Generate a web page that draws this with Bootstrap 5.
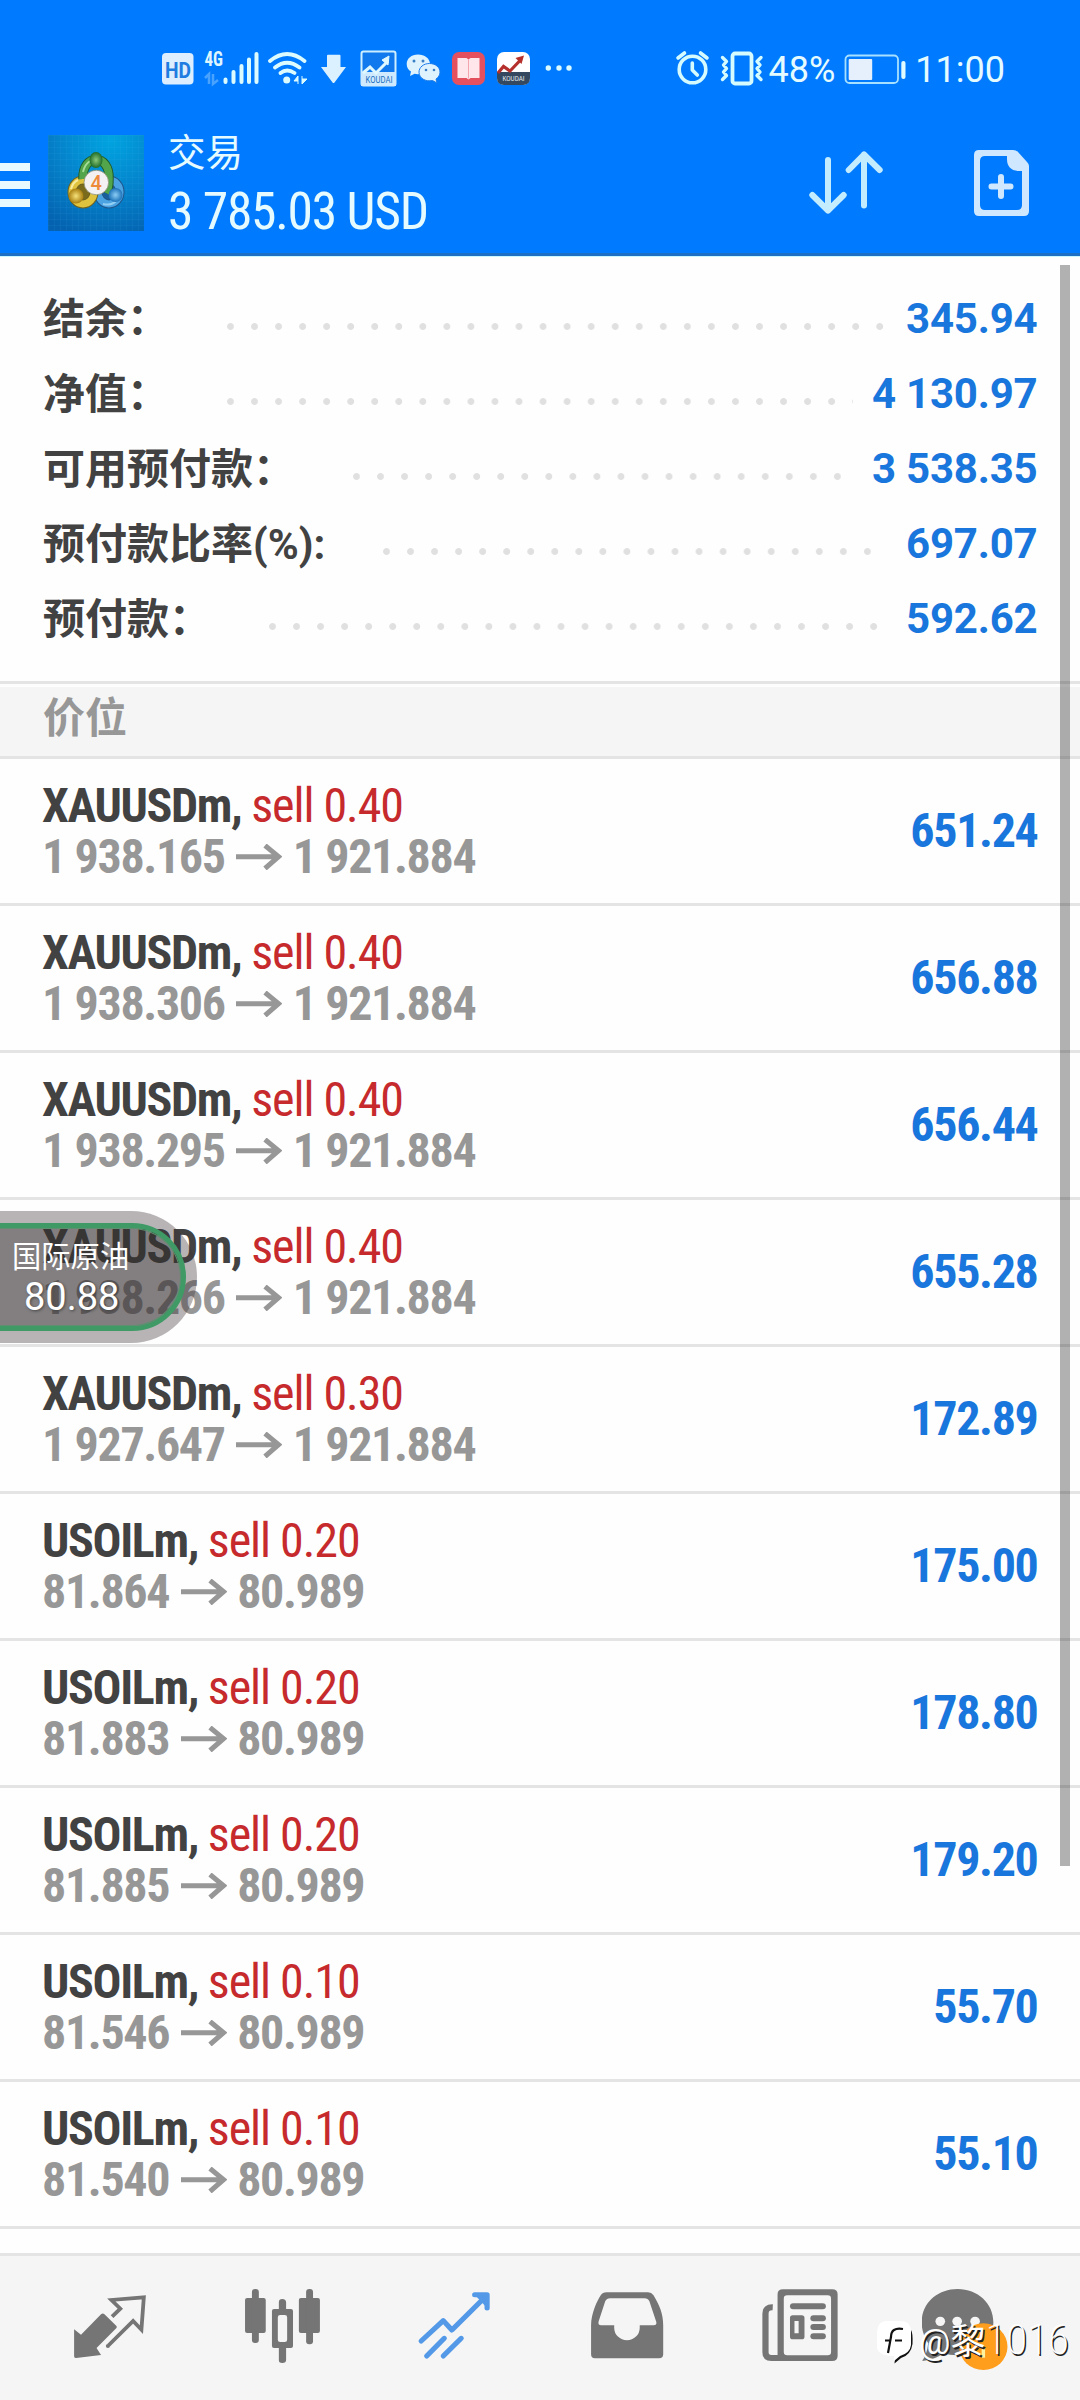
<!DOCTYPE html>
<html lang="zh-CN">
<head>
<meta charset="utf-8">
<meta name="viewport" content="width=device-width, initial-scale=1">
<title>交易</title>
<link href="https://cdn.jsdelivr.net/npm/bootstrap@5.3.0/dist/css/bootstrap.min.css" rel="stylesheet">
<style>
body{font-family:Roboto,"Noto Sans CJK SC",sans-serif;background:#fefefe;color:#424242;width:1080px;height:2400px;overflow:hidden;white-space:nowrap}
svg{display:block;flex:none}
.app-head{height:256px;background:#007bff;border-bottom:3px solid #1c6fc4;color:#e6fbff;box-shadow:0 1px #c8f8ff}
.status-bar{height:64px;margin-top:37px;padding:0 75px 0 161px}
.status-txt{font-size:36px;line-height:1;padding-top:2px}
.title-bar{height:130px;padding-right:51px;margin-top:17px}
.menu-btn{gap:10px;padding-top:3px}
.menu-btn i{display:block;width:30px;height:8px;background:#e8faff}
.app-logo{margin-left:18px}
.head-text{margin-left:24px;padding-top:4px}
.head-title{font-size:37.5px;line-height:44px;margin-bottom:9px}
.cond{font-stretch:75%}
.head-sum{font-size:51.5px;line-height:56px;letter-spacing:-1.25px;font-weight:450}
.stats{padding:25px 42.5px 0 43px;height:425px;font-size:42px;font-weight:700}
.stat-line{height:75px}
.stat-label{padding-top:2px}
.leader{height:7px;margin:16px 19px 0 58px;background:radial-gradient(circle at 3.5px 3.5px,#e0e0e0 3px,transparent 3.8px) 0 0/24.06px 7px repeat-x}
.val{color:#1876dc}
.stats .val{letter-spacing:-.2px}
.section-head{height:78px;border-top:3px solid #e4e4e4;border-bottom:3px solid #e4e4e4;background:#f5f5f5;box-shadow:inset 0 3px #fdfdfd;color:#979797;font-size:42px;font-weight:700;padding-left:43px;padding-bottom:4px}
.pos{height:147px;border-bottom:3px solid #e4e4e4;padding:0 42.5px 0 42px;font-size:48px;font-stretch:75%;font-weight:700;line-height:51px;letter-spacing:-1.35px}
.pos .val{padding-bottom:2px}
.side{font-weight:450;letter-spacing:-1.05px;color:#c62a2c}
.route{color:#979797}
.route svg{margin:0 10.5px 0 11.5px}
.tabs{height:147px;border-top:3px solid #e4e4e4;background:#f5f5f5;padding-left:24px;margin-top:24px}
.tab-item{width:172.5px;color:#757575}
.scroll-thumb{left:1060px;top:265px;width:10px;height:1601px;background:rgba(0,0,0,.3)}
.bubble{left:-70px;top:1211px;width:267px;height:132px;border-radius:66px;background:rgba(60,50,55,.36);padding:12px 11px 12px 0}
.bubble-in{border:5px solid #3f9a66;border-radius:55px;background:rgba(45,42,40,.38);color:#fff;padding-left:73px;box-shadow:inset 0 0 0 1px #5f8f70}
.bubble-name{font-size:29.3px;line-height:32px;padding-left:4px;margin-top:5px}
.bubble-rate{font-size:38px;line-height:48px;padding-left:16px;font-weight:450;text-shadow:1px 1px 3px #444}
.sign{left:875px;top:2314px;color:#fff;text-shadow:1.5px 1.5px 0 #222}
.sign-txt{font-size:35px;line-height:50px;margin-left:6px}
.sign-num{font-size:43px;font-weight:200;font-stretch:75%}
</style>
<script src="https://cdn.jsdelivr.net/npm/bootstrap@5.3.0/dist/js/bootstrap.bundle.min.js"></script>
</head>
<body class="position-relative">
<svg width="0" height="0" class="position-absolute"><symbol id="arr" viewBox="0 0 46 26"><path d="M0 12.700H43M29 1.500L42.500 12.700 29 24.500" fill="none" stroke="#979797" stroke-width="5"/></symbol></svg>

<header class="app-head overflow-hidden">
  <div class="status-bar d-flex align-items-center justify-content-between">
    <svg width="412" height="44" viewBox="161 47 412 44">
      <rect x="162" y="53" width="31.500" height="31.500" rx="4" fill="#dceeff"/>
      <text x="165" y="77.500" font-size="22" font-weight="700" fill="#1f7ce0" textLength="26" lengthAdjust="spacingAndGlyphs">HD</text>
      <text x="204.500" y="66" font-size="20" font-weight="700" class="cond" fill="#dff6ff" textLength="18.500" lengthAdjust="spacingAndGlyphs">4G</text>
      <path d="M209 84V74l-4 4M213 74v10l5-4" fill="none" stroke="#4aa2ff" stroke-width="2.500"/>
      <path d="M225.500 79.500V82M233.500 72V82M241.500 66V82M249 59.500V82M256.500 54V82" stroke="#dcfbff" stroke-width="4" stroke-linecap="round"/>
      <path d="M270 61Q287 47 304.500 61M275 67.500Q287 58 299.500 67.500M280.500 73Q287 68 294.500 73" fill="none" stroke="#dcfbff" stroke-width="3.800" stroke-linecap="round"/>
      <circle cx="286.700" cy="80" r="3.500" fill="#dcfbff"/>
      <path d="M298 84V76l-4 5h4M302 76v8l5-5h-5" fill="#dcfbff" stroke="#dcfbff"/>
      <path d="M328 54.700h11.500q1 0 1 1V67h5.500L334.500 82.500q-1 1-2 0L321 67h6V55.700q0-1 1-1z" fill="#dcf1ff"/>
      <rect x="361.500" y="51.500" width="34" height="34" rx="2" fill="#1179ee" stroke="#cdeeff" stroke-width="2"/>
      <path d="M361 72h35v14h-35z" fill="#cfeaff"/>
      <path d="M363 73l7-6 6 6 12-12" fill="none" stroke="#dff8ff" stroke-width="3"/><path d="M382 60l7-4-1 9z" fill="#dff8ff" stroke="#dff8ff"/>
      <text x="365.500" y="83" font-size="9" fill="#206fc0" textLength="27" lengthAdjust="spacingAndGlyphs">KOUDAI</text>
      <path d="M418 54.500c-6.500 0-11.300 4-11.300 9.500 0 3.500 1.700 6 4.300 7.600l-1 4.400 4.600-2.200c7.400 1.800 15.400-3 15.400-9.800 0-5.500-5.500-9.500-12-9.500z" fill="#dff3ff"/>
      <circle cx="414" cy="61" r="1.500" fill="#3b80c4"/><circle cx="423" cy="61" r="1.500" fill="#3b80c4"/>
      <path d="M429.500 63.500c-6 0-10.500 3.800-10.500 8.700 0 6 6.500 9.800 13.500 8.300l4.500 2.500-1-4c2.400-1.600 4-4 4-6.800 0-4.900-4.500-8.700-10.500-8.700z" fill="#dff3ff" stroke="#1b7bea" stroke-width="1"/>
      <circle cx="426" cy="70" r="1.300" fill="#3b80c4"/><circle cx="434" cy="70" r="1.300" fill="#3b80c4"/>
      <rect x="452" y="52" width="33" height="33" rx="7" fill="#e5505e"/>
      <path d="M457.500 58h9l2 1.500 2-1.500h9v20h-9l-2 1.500-2-1.500h-9z" fill="#ffe6ea"/><path d="M468.500 59.500v19" stroke="#f2a5ae" stroke-width="1"/>
      <rect x="497" y="52" width="33" height="33" rx="7" fill="#fff"/>
      <path d="M497 72h33v6q0 7-7 7h-19q-7 0-7-7z" fill="#34495f"/>
      <path d="M498 73l5.500-6.500 6.500 4.500 11-11.500" fill="none" stroke="#b5302c" stroke-width="3.200"/><path d="M515.500 58l8.500-2.500-2.500 8.500z" fill="#b5302c"/>
      <text x="502.500" y="81" font-size="7.500" fill="#e8eef4" textLength="22" lengthAdjust="spacingAndGlyphs">KOUDAI</text>
      <g fill="#dcfbff"><circle cx="548.300" cy="68" r="2.700"/><circle cx="559" cy="68" r="2.700"/><circle cx="569" cy="68" r="2.700"/></g>
    </svg>
    <div class="d-flex align-items-center">
      <svg width="94" height="44" viewBox="675 47 94 44" fill="none" stroke="#d6fbff" stroke-linecap="round" stroke-linejoin="round">
        <circle cx="692.500" cy="69.500" r="13.300" stroke-width="3.600"/><path d="M692.300 63v7l5 5" stroke-width="3.600"/>
        <path d="M678 58l6.500-5M707 58l-6.500-5" stroke-width="3.600"/>
        <rect x="732.500" y="53.500" width="19" height="30" rx="2.500" stroke-width="3.800"/>
        <path d="M722.500 57.500l4 4-3 3.500 3 3.500-3 3.500 3 3.500-4 4M761 57.500l-4 4 3 3.500-3 3.500 3 3.500-3 3.500 4 4" stroke-width="3.400"/>
      </svg>
      <span class="status-txt">48%</span>
      <svg width="72" height="36" viewBox="835 50 72 36" class="me-2">
        <rect x="845.500" y="54.500" width="52.500" height="27.500" rx="4" fill="none" stroke="#a8e0ff" stroke-width="1.800"/>
        <rect x="848.700" y="58" width="23.500" height="21" rx="1" fill="#e6effc"/><rect x="901.300" y="60" width="4.200" height="18" rx="2" fill="#e0fbff"/>
      </svg>
      <span class="status-txt">11:00</span>
    </div>
  </div>
  <div class="title-bar d-flex align-items-center">
    <div class="menu-btn d-flex flex-column"><i></i><i></i><i></i></div>
    <svg width="96" height="96" viewBox="0 0 96 96" class="app-logo">
      <defs>
        <radialGradient id="bgd" cx=".65" cy=".05" r="1.050"><stop offset="0" stop-color="#00a4e0"/><stop offset=".5" stop-color="#0484cc"/><stop offset="1" stop-color="#0462b0"/></radialGradient>
        <pattern id="grd" width="6" height="6" patternUnits="userSpaceOnUse"><path d="M0 0H6M0 0V6" stroke="#4ab8ee" stroke-opacity=".15" stroke-width="1"/></pattern>
        <radialGradient id="gg"><stop offset="0" stop-color="#8cc97c"/><stop offset="1" stop-color="#1f6b28"/></radialGradient>
        <radialGradient id="gy"><stop offset="0" stop-color="#f6e27a"/><stop offset="1" stop-color="#a87e10"/></radialGradient>
        <radialGradient id="gb"><stop offset="0" stop-color="#8ccdf5"/><stop offset="1" stop-color="#1c72b8"/></radialGradient>
      </defs>
      <path fill="url(#bgd)" d="M0 0h96v96H0z"/><path fill="url(#grd)" d="M0 0h96v96H0z"/>
      <ellipse cx="61" cy="57" rx="11" ry="12" fill="#1b5f9a" stroke="#1f568c" stroke-width="9"/>
      <ellipse cx="61" cy="57" rx="11" ry="12" fill="none" stroke="#4ba3e2" stroke-width="7"/>
      <ellipse cx="35" cy="57" rx="11" ry="12" fill="#7a6a1c" stroke="#6e6220" stroke-width="9"/>
      <ellipse cx="35" cy="57" rx="11" ry="12" fill="none" stroke="#dfc23e" stroke-width="7"/>
      <path d="M35 44C34 18 62 18 61 44 61 52 60 54 58 58" fill="none" stroke="#1f5a2c" stroke-width="9.500"/>
      <path d="M35 44C34 18 62 18 61 44 61 52 60 54 58 58" fill="none" stroke="#52a54a" stroke-width="7.500"/>
      <path d="M35 37q2-8 7-11" fill="none" stroke="#a5dc98" stroke-width="2"/>
      <path d="M23 54q2-7 7-9" fill="none" stroke="#f8ec9c" stroke-width="2"/>
      <path d="M55 69q8 2 13-3" fill="none" stroke="#93cff4" stroke-width="2"/>
      <ellipse cx="48" cy="25" rx="6.500" ry="8" fill="url(#gg)"/><circle cx="28" cy="61" r="7.500" fill="url(#gy)"/><circle cx="67.500" cy="60" r="7" fill="url(#gb)"/>
      <circle cx="48.300" cy="47.500" r="12.300" fill="#f4f1f2" stroke="#8a8f70" stroke-width=".8"/>
      <text x="48.300" y="54.500" font-size="20" font-weight="500" text-anchor="middle" fill="#ee8a3c">4</text>
    </svg>
    <div class="head-text flex-grow-1">
      <div class="head-title">交易</div>
      <div class="head-sum cond">3 785.03 USD</div>
    </div>
    <svg width="76" height="68" viewBox="807 149 76 68" fill="none" stroke="#c4ecff" stroke-width="6" stroke-linecap="round" stroke-linejoin="round"><path d="M828 160V210.500M812.300 195L828 210.500 843.700 195M864 205.500V154.500M848.700 170L864 154.500 879.700 170"/></svg>
    <svg width="55" height="67" viewBox="0 0 55 67" style="margin-left:91px"><path fill="#cfe8ff" fill-rule="evenodd" d="M5 0H39q3 0 5 2L53 12q2 2 2 4V61q0 5-5 5H5q-5 0-5-5V5Q0 0 5 0zM11 6q-5 0-5 5V55q0 5 5 5H43q5 0 5-5V21H44Q33 20 33 9V6z"/><path d="M27 27V46M17.500 36.500H36.500" stroke="#cfe8ff" stroke-width="6" stroke-linecap="round"/></svg>
  </div>
</header>

<main>
  <section class="stats">
    <div class="stat-line d-flex align-items-center"><span class="stat-label">结余：</span><span class="leader flex-grow-1"></span><span class="val">345.94</span></div>
    <div class="stat-line d-flex align-items-center"><span class="stat-label">净值：</span><span class="leader flex-grow-1"></span><span class="val">4 130.97</span></div>
    <div class="stat-line d-flex align-items-center"><span class="stat-label">可用预付款：</span><span class="leader flex-grow-1"></span><span class="val">3 538.35</span></div>
    <div class="stat-line d-flex align-items-center"><span class="stat-label">预付款比率(%):</span><span class="leader flex-grow-1"></span><span class="val">697.07</span></div>
    <div class="stat-line d-flex align-items-center"><span class="stat-label">预付款：</span><span class="leader flex-grow-1"></span><span class="val">592.62</span></div>
  </section>
  <div class="section-head d-flex align-items-center">价位</div>
  <section>
    <div class="pos d-flex align-items-center justify-content-between"><div><div>XAUUSDm, <span class="side">sell 0.40</span></div><div class="route d-flex align-items-center"><span>1 938.165</span><svg width="46" height="26"><use href="#arr"/></svg><span>1 921.884</span></div></div><span class="val">651.24</span></div>
    <div class="pos d-flex align-items-center justify-content-between"><div><div>XAUUSDm, <span class="side">sell 0.40</span></div><div class="route d-flex align-items-center"><span>1 938.306</span><svg width="46" height="26"><use href="#arr"/></svg><span>1 921.884</span></div></div><span class="val">656.88</span></div>
    <div class="pos d-flex align-items-center justify-content-between"><div><div>XAUUSDm, <span class="side">sell 0.40</span></div><div class="route d-flex align-items-center"><span>1 938.295</span><svg width="46" height="26"><use href="#arr"/></svg><span>1 921.884</span></div></div><span class="val">656.44</span></div>
    <div class="pos d-flex align-items-center justify-content-between"><div><div>XAUUSDm, <span class="side">sell 0.40</span></div><div class="route d-flex align-items-center"><span>1 938.266</span><svg width="46" height="26"><use href="#arr"/></svg><span>1 921.884</span></div></div><span class="val">655.28</span></div>
    <div class="pos d-flex align-items-center justify-content-between"><div><div>XAUUSDm, <span class="side">sell 0.30</span></div><div class="route d-flex align-items-center"><span>1 927.647</span><svg width="46" height="26"><use href="#arr"/></svg><span>1 921.884</span></div></div><span class="val">172.89</span></div>
    <div class="pos d-flex align-items-center justify-content-between"><div><div>USOILm, <span class="side">sell 0.20</span></div><div class="route d-flex align-items-center"><span>81.864</span><svg width="46" height="26"><use href="#arr"/></svg><span>80.989</span></div></div><span class="val">175.00</span></div>
    <div class="pos d-flex align-items-center justify-content-between"><div><div>USOILm, <span class="side">sell 0.20</span></div><div class="route d-flex align-items-center"><span>81.883</span><svg width="46" height="26"><use href="#arr"/></svg><span>80.989</span></div></div><span class="val">178.80</span></div>
    <div class="pos d-flex align-items-center justify-content-between"><div><div>USOILm, <span class="side">sell 0.20</span></div><div class="route d-flex align-items-center"><span>81.885</span><svg width="46" height="26"><use href="#arr"/></svg><span>80.989</span></div></div><span class="val">179.20</span></div>
    <div class="pos d-flex align-items-center justify-content-between"><div><div>USOILm, <span class="side">sell 0.10</span></div><div class="route d-flex align-items-center"><span>81.546</span><svg width="46" height="26"><use href="#arr"/></svg><span>80.989</span></div></div><span class="val">55.70</span></div>
    <div class="pos d-flex align-items-center justify-content-between"><div><div>USOILm, <span class="side">sell 0.10</span></div><div class="route d-flex align-items-center"><span>81.540</span><svg width="46" height="26"><use href="#arr"/></svg><span>80.989</span></div></div><span class="val">55.10</span></div>
  </section>
</main>

<nav class="tabs d-flex">
  <div class="tab-item d-flex justify-content-center"><svg width="78" height="75" viewBox="207 200 226 225" preserveAspectRatio="none" style="margin-top:31px"><path fill="currentColor" d="M216 327L236 343 294 282Q299 277 304 282L338 316Q342 320 338 324L281 383 294 404 222 413Q216 414 216 408z"/><path fill="none" stroke="currentColor" stroke-width="11" d="M326 289L350 265 324 239 418 231 411 328 387 302 316 375"/><circle cx="314" cy="377" r="6" fill="currentColor"/></svg></div>
  <div class="tab-item d-flex justify-content-center"><svg width="78" height="75" viewBox="706 207 226 225" preserveAspectRatio="none" style="margin-top:33px" fill="currentColor"><rect x="709" y="234" width="60" height="105" rx="6"/><rect x="729" y="207" width="20" height="162" rx="9"/><rect x="865" y="234" width="61" height="105" rx="6"/><rect x="886" y="207" width="20" height="166" rx="9"/><path fill-rule="evenodd" d="M807 267V247q0-10 10-10t11 10V267h14q6 0 6 6V378q0 6-6 6H828V420q0 9-11 9t-10-9V384H793q-6 0-6-6V273q0-6 6-6zM811 285q-7 0-7 7V359q0 7 7 7h13q7 0 7-7V292q0-7-7-7z"/></svg></div>
  <div class="tab-item d-flex justify-content-center"><svg width="78" height="75" viewBox="1206 200 226 225" preserveAspectRatio="none" style="margin-top:31px" fill="none" stroke="#5399e8" stroke-width="15" stroke-linecap="round" stroke-linejoin="round"><path d="M1221 362L1285 301 1310 329 1410 226M1237 407L1288 354M1285 407L1337 354"/><path d="M1376 223H1412V263z" fill="#5399e8" stroke="none"/><path d="M1376 223H1412V263"/></svg></div>
  <div class="tab-item d-flex justify-content-center"><svg width="78" height="75" viewBox="141 200 226 225" preserveAspectRatio="none" style="margin-top:31px"><path fill="currentColor" fill-rule="evenodd" d="M147 315C147 280 165 240 175 225Q180 216 192 216H312Q322 216 328 225C345 255 356 280 356 315V402Q356 414 344 414H158Q147 414 147 402zM202 234H302Q312 234 316 243L336 305Q338 315 328 315H288V322A37 38 0 0 1 214 322V315H176Q166 315 169 303L188 243Q192 234 202 234z"/></svg></div>
  <div class="tab-item d-flex justify-content-center"><svg width="78" height="75" viewBox="642 200 226 225" preserveAspectRatio="none" style="margin-top:31px"><path fill="currentColor" fill-rule="evenodd" d="M706 207H848Q864 207 864 222V406Q864 422 848 422H690V222Q690 207 706 207zM718 225Q708 225 708 235V395Q708 405 718 405H835Q845 405 845 395V235Q845 225 835 225z"/><path d="M676 261Q655 260 655 280V396Q655 413 672 413H700" fill="none" stroke="currentColor" stroke-width="18"/><g fill="currentColor"><rect x="726" y="249" width="104" height="18" rx="9"/><path fill-rule="evenodd" d="M734 285h26q8 0 8 8v56q0 8-8 8h-26q-8 0-8-8v-56q0-8 8-8zM739 302v37h12v-37z"/><rect x="785" y="285" width="45" height="18" rx="9"/><rect x="785" y="311" width="45" height="18" rx="9"/><rect x="785" y="339" width="45" height="18" rx="9"/></g></svg></div>
  <div class="tab-item d-flex justify-content-center"><svg width="101" height="83" viewBox="1110 207 293 249" preserveAspectRatio="none" style="margin-top:33px"><path fill="currentColor" d="M1213 207C1272 207 1317 250 1317 307S1272 406 1213 406Q1190 406 1172 400 1148 420 1110 423 1124 405 1128 370 1109 340 1109 307C1109 250 1154 207 1213 207z"/><g fill="#f5f5f5"><circle cx="1163" cy="304" r="14"/><circle cx="1212" cy="304" r="14"/><circle cx="1264" cy="304" r="14"/></g><ellipse cx="1288" cy="380" rx="70" ry="70" fill="#ff9d1c"/><path d="M1288 385V413" stroke="#fff3a0" stroke-width="10"/></svg></div>
</nav>

<div class="scroll-thumb position-absolute"></div>
<div class="bubble position-absolute"><div class="bubble-in h-100 pt-2"><div class="bubble-name">国际原油</div><div class="bubble-rate">80.88</div></div></div>
<div class="sign position-absolute d-flex align-items-center">
  <svg width="38" height="46" viewBox="0 0 38 46"><path d="M36 12q2 3 1.500 14Q36 37 26 40L19.500 45.500 20 40q5-2 6-4l9-6z" fill="#111"/><path d="M11 3H25Q36 3 36 14V27Q35 35 25 38L19 43V38Q4 38 2 30V14Q3 3 11 3z" fill="#fff"/><path d="M28 11Q16 9 16 19L13 35M10 22.500H16M20 22.500H27" fill="none" stroke="#111" stroke-width="2.200"/></svg>
  <span class="sign-txt">@黎<span class="sign-num">1016</span></span>
</div>
</body>
</html>
